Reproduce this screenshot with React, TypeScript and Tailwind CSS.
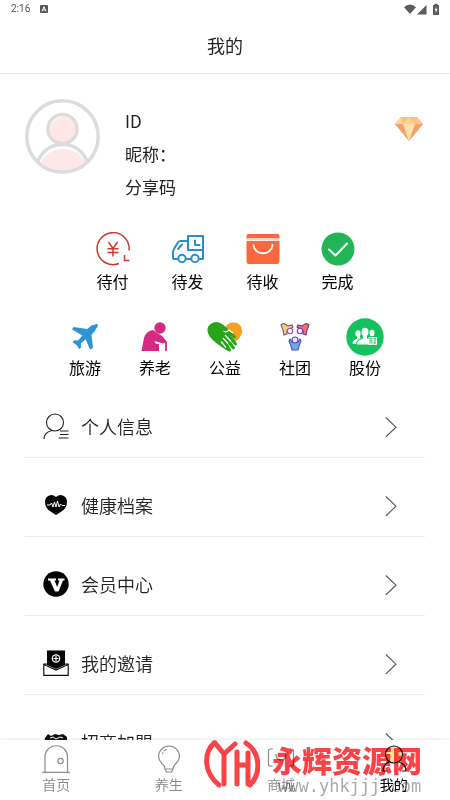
import type { ReactNode } from "react";

function StatusBar() {
  return (
    <div className="flex h-[18px] shrink-0 items-center justify-between pr-[10px] pl-[11px] font-['Roboto',sans-serif] text-[10px] leading-none text-[#555]">
      <div className="flex items-center gap-[10px]">
        <span>2:16</span>
        <svg className="size-2" viewBox="0 0 8 8" aria-hidden="true">
          <rect width="8" height="8" rx="1" fill="#555" />
          <path d="M2 6.4 4 1.7l2 4.7M2.8 4.9h2.4" fill="none" stroke="#fff" strokeWidth="1" />
        </svg>
      </div>
      <svg className="h-3 w-9" viewBox="0 0 36 12" fill="#5c5c5c" aria-hidden="true">
        <path d="M0 4.2Q6-1.4 12 4.2L6 11z" />
        <path d="M22.500 2v9.500H13z" />
        <path d="M29 2h1.500V.8h3V2H35v10h-6z" />
        <path d="M32.500 3.800 30.600 7.300h1.200v2.500l1.800-3.600h-1.200z" fill="#fff" />
      </svg>
    </div>
  );
}

function Avatar() {
  return (
    <svg className="size-[75px] shrink-0" viewBox="0 0 75 75" role="img" aria-label="头像">
      <circle cx="38" cy="31" r="13" fill="#ffe7e8" />
      <path d="M16 63Q23 50 38 50t22 13Q50 72.500 37.500 72.500T16 63z" fill="#ffe7e8" />
      <g fill="none" stroke="#dcdcdc" strokeWidth="3.500">
        <circle cx="37.500" cy="37.500" r="35.700" />
        <circle cx="37.500" cy="30" r="14.500" />
        <path d="M13 62C18 51 27 45.500 37.500 45.500S57 51 62 62" />
      </g>
    </svg>
  );
}

function Gem() {
  return (
    <svg className="h-[26px] w-[30px]" viewBox="0 0 30 26" role="img" aria-label="会员">
      <path d="M7 1h16l6 7-14 17L1 8z" fill="#f9c27c" />
      <path d="M1 8h8l6 17z" fill="#f3a06b" />
      <path d="M29 8h-8l-6 17z" fill="#f3a06b" />
      <path d="M9 8h12l-6 17z" fill="#fde0ab" />
      <path d="M15 1 9 8h12z" fill="#fbd091" />
      <path d="M7 1 1 8h8z" fill="#fbd59c" />
      <path d="m23 1 6 7h-8z" fill="#f9c889" />
    </svg>
  );
}

const unpaid = (
  <svg className="size-[34px]" viewBox="0 0 34 34" fill="none" stroke="#c93a2c" strokeWidth="1.500" aria-hidden="true">
    <path d="M23 31.500A16 16 0 1 1 33 18.500" />
    <path d="m12.500 10 4.500 6.500 4.500-6.500M17 16.500v8M11.500 16.800h11M11.500 20.500h11M28.500 23v5.500h5" />
  </svg>
);
const truck = (
  <svg className="size-[34px]" viewBox="0 0 34 34" fill="none" stroke="#278fce" strokeWidth="2" strokeLinejoin="round" strokeLinecap="round" aria-hidden="true">
    <path d="M15.500 9H9.500Q7.500 9 6.500 11L3 17l-1 2.500V26q0 1 1 1h4M15 27h5M28 27h4V4H17v14h15" />
    <path d="M24 8.500V13h4.500M7 17l4-4.500" />
    <circle cx="11" cy="26.500" r="3.700" />
    <circle cx="24" cy="26.500" r="3.700" />
  </svg>
);
const bag = (
  <svg className="size-[34px]" viewBox="0 0 34 34" aria-hidden="true">
    <path d="M2.500 2h29q2 0 2 2v2.500H.5V4q0-2 2-2zM.5 9h33v20.500q0 2.500-2.500 2.500H3Q.5 32 .5 29.500z" fill="#f9683f" />
    <path d="M.5 6.200h33V8.500H.5z" fill="#ffd1bf" />
    <path d="M7.500 13c1 11 18 11 19 0" fill="none" stroke="#fff3ec" strokeWidth="2" strokeLinecap="round" />
  </svg>
);
const done = (
  <svg className="size-[34px]" viewBox="0 0 34 34" aria-hidden="true">
    <circle cx="17" cy="17" r="16.500" fill="#22b556" />
    <path d="m8 17.500 6.500 6L26 11.500" fill="none" stroke="#fff" strokeWidth="2" strokeLinecap="round" strokeLinejoin="round" />
  </svg>
);
const plane = (
  <svg className="size-[38px]" viewBox="0 0 38 38" fill="#2b96d3" aria-hidden="true">
    <path d="M30 6.200c1.600-.8 2.400.4 1.700 2L28.500 13.500l-3 3.300 1.500 13.200-3 1.500-4.300-10.200-5 4.200.5 4-2 1.600-2.600-4.200-4.100-2.700 1.700-2 3.800.4 4.500-5L6 11.500 7.500 9l13.800 2L25.500 7.500z" />
  </svg>
);
const elder = (
  <svg className="size-[38px]" viewBox="0 0 38 38" fill="#d52a82" aria-hidden="true">
    <circle cx="24" cy="10" r="5.700" />
    <path d="M17 12Q10.500 12.500 8 20L5.500 33H23v-7h-3l-1.500-3 9 2.500 3-1.500Q27 18 24.500 17z" />
    <path d="M25.500 25q0-2.500 2-2.500t2.500 2.500v8" fill="none" stroke="#d52a82" strokeWidth="1.800" />
  </svg>
);
const charity = (
  <svg className="size-[38px]" viewBox="0 0 38 38" aria-hidden="true">
    <path d="M19 10q2.500-5.500 8-5.500 8.500 0 9 8 .3 5-4.500 9.500L28 25 18 14z" fill="#f7a01f" />
    <path d="M4.500 6Q11 1.500 17.500 7L29 17.500q1.500 1.500.5 2.500t-2.500-.5L23 16l7 8q1.500 2 .5 3t-2.500-.5l-5-5.500 5 7q1.500 2 .5 3t-2.500-.5l-5-6 3.500 6q1 1.500 0 2.500t-2.500 0Q10 26 4 19-1.500 11 4.500 6z" fill="#28a31a" />
    <path d="m17 20 5 5.500m-7-2 5 6M19 17l6 6.500M17.500 13q3 2 5.500-1l4 3" fill="none" stroke="#fff" strokeWidth="1.200" />
  </svg>
);
const club = (
  <svg className="size-[38px]" viewBox="0 0 38 38" strokeWidth="1.100" aria-hidden="true">
    <path d="M5 7q2-2 4-1l3 2 4-1 1 2-3 2q-4 1-3 5l-3 1-1-5z" fill="#f6ce72" stroke="#70558b" />
    <path d="M33 7q-2-2-4-1l-3 2-4-1-1 2 3 2q4 1 3 5l3 1 1-5z" fill="#f0706c" stroke="#7d3379" />
    <circle cx="14" cy="13" r="2.700" fill="#fff" stroke="#b148a1" />
    <circle cx="24" cy="13" r="2.700" fill="#fff" stroke="#793bbb" />
    <path d="m14 21 2 3h6l2-3 1 2-2 5-1 4h-6l-1-4-2-5z" fill="#6aa9f4" stroke="#4f53b5" />
    <circle cx="19" cy="22" r="3" fill="#f4dcf4" stroke="#554fa6" />
  </svg>
);
const shares = (
  <svg className="size-[38px]" viewBox="0 0 38 38" aria-hidden="true">
    <circle cx="19" cy="19" r="18.700" fill="#15c15d" />
    <g fill="#fff">
      <ellipse cx="19" cy="14" rx="3.500" ry="4.300" />
      <path d="M11 26.500q0-4 4-5l2-1v-3h4v3l2 1v5z" />
      <ellipse cx="12" cy="15.500" rx="2.600" ry="3.300" />
      <path d="M6.500 26q0-4 3-4.500l1.500-1V18h3l.5 2.500q-4.500 2-4.500 5.500z" />
      <ellipse cx="26" cy="15" rx="2.500" ry="3.300" />
      <path d="M22.500 19h8.500v8h-8.500z" />
    </g>
    <path d="M24 20v6m0-5.500h2V26m-2-3h2m1.500-2.500H30l-.5 2h-1l-.5-2m-.5 3.500H30l-2.500 2.500m0-2.500 2.500 2.500" fill="none" stroke="#15c15d" strokeWidth=".7" />
  </svg>
);

const personIcon = (
  <svg className="size-[26px]" viewBox="0 0 26 26" fill="none" stroke="#222" strokeWidth="1.100" aria-hidden="true">
    <circle cx="12" cy="9.500" r="8.500" />
    <path d="M9 17.500Q1.500 19 1 26M17 18h8.500m-8.500 3.500h8.500M15.500 25h10" />
  </svg>
);
const healthIcon = (
  <svg className="size-[26px]" viewBox="0 0 26 26" aria-hidden="true">
    <path d="M13 5Q10 2.500 7 3.200 2 4.500 2 10q0 5 4 8.500L13 23l7-4.500q4-3.500 4-8.500 0-5.500-5-6.800-3-.7-6 1.800z" fill="#050505" />
    <path d="M4 13h3l1.500-2 1.500 4 1.500-5 1.500 5 1.500-6 1.500 6 1.500-3 1.500 1.500h3" fill="none" stroke="#fff" strokeWidth="1" />
  </svg>
);
const vipIcon = (
  <svg className="size-[26px]" viewBox="0 0 26 26" aria-hidden="true">
    <circle cx="13" cy="13" r="12.700" fill="#050505" />
    <path d="M5 7.500h8v2h-1.500l2.700 6.500L16.500 9.500H15v-2h6.500v2H20L15.500 20.500h-3.500L7 9.500H5z" fill="#fff" />
  </svg>
);
const inviteIcon = (
  <svg className="size-[26px]" viewBox="0 0 26 26" aria-hidden="true">
    <path d="M4 14H.8v11.300h24.400V14H22M1 14.500 13 20l12-5.500" fill="none" stroke="#111" strokeWidth="1.200" />
    <path d="M4 .5h18V15l-9 4-9-4z" fill="#050505" />
    <circle cx="13" cy="8.500" r="3.700" fill="none" stroke="#fff" strokeWidth="1.300" />
    <path d="M13 6v5m-2.500-2.500h5" stroke="#fff" strokeWidth="1.200" />
  </svg>
);
const joinIcon = (
  <svg className="size-[26px]" viewBox="0 0 26 26" fill="#111" aria-hidden="true">
    <path d="m2 9 3-4 3 2 4-2 4 1 4-1 4 3v8l-6 4-6 4-8-7-3-2z" />
    <path d="m7 9 3-1 3 2 4-2 3 1" fill="none" stroke="#fff" strokeWidth="1" />
  </svg>
);

const orders = [
  { label: "待付", icon: unpaid },
  { label: "待发", icon: truck },
  { label: "待收", icon: bag },
  { label: "完成", icon: done },
];
const services = [
  { label: "旅游", icon: plane },
  { label: "养老", icon: elder },
  { label: "公益", icon: charity },
  { label: "社团", icon: club },
  { label: "股份", icon: shares },
];
const menu = [
  { label: "个人信息", icon: personIcon },
  { label: "健康档案", icon: healthIcon },
  { label: "会员中心", icon: vipIcon },
  { label: "我的邀请", icon: inviteIcon },
  { label: "招商加盟", icon: joinIcon },
];

function Shortcut({ label, icon }: { label: string; icon: ReactNode }) {
  return (
    <button type="button" className="flex flex-1 flex-col items-center justify-between text-base leading-[23px] text-black">
      {icon}
      {label}
    </button>
  );
}

function MenuRow({ label, icon }: { label: string; icon: ReactNode }) {
  return (
    <li className="border-b border-[#ececec] pt-[33px] pb-[17px]">
      <a href="#" className="flex h-7 items-center gap-3 pr-7 pl-[18px] text-lg leading-7 font-[350] text-[#222]">
        {icon}
        <span className="flex-1">{label}</span>
        <svg className="h-[22px] w-3" viewBox="0 0 12 22" fill="none" stroke="#555" strokeWidth="1.100" aria-hidden="true">
          <path d="m.8 2.500 10.200 9.700L.8 22" />
        </svg>
      </a>
    </li>
  );
}

const homeTab = (
  <svg className="size-7" viewBox="0 0 28 28" fill="none" stroke="#8c8c8c" strokeWidth="1.200" aria-hidden="true">
    <path d="M0 27.300h28M3 27V12a11 11 0 0 1 22.500 0v15" />
    <circle cx="18.500" cy="16" r="2.700" />
  </svg>
);
const bulbTab = (
  <svg className="size-7" viewBox="0 0 28 28" fill="none" stroke="#8c8c8c" strokeWidth="1.200" aria-hidden="true">
    <path d="M10 24Q10 21 7 18.500 3.500 15 3.500 11.500A10.500 10.500 0 0 1 24.500 11.500q0 3.500-3.500 7-3 2.500-3 5.500zM10 24l1.500 3h5l1.500-3M7.500 9l.5-1.500M9 6l2.500-1.700" />
  </svg>
);
const shopTab = (
  <svg className="size-7" viewBox="0 0 28 28" fill="none" stroke="#8c8c8c" strokeWidth="1.200" aria-hidden="true">
    <path d="M6 4H3.500Q1.500 4 1.500 6v13q0 2 2 2H6M22 4h2.500q2 0 2 2v13q0 2-2 2H22M9 9q0 6 5 6t5-6" />
  </svg>
);
const mineTab = (
  <svg className="size-7" viewBox="0 0 28 28" aria-hidden="true">
    <circle cx="14" cy="9.500" r="8.500" fill="#ffdf9e" stroke="#151515" strokeWidth="1.200" />
    <path d="M9 17q-6 2.500-6 9h4M19 17q7 2.500 7 9h-4" fill="none" stroke="#151515" strokeWidth="1.200" />
  </svg>
);

const tabs = [
  { label: "首页", icon: homeTab, active: false },
  { label: "养生", icon: bulbTab, active: false },
  { label: "商城", icon: shopTab, active: false },
  { label: "我的", icon: mineTab, active: true },
];

function Watermark() {
  return (
    <div className="pointer-events-none absolute right-7 bottom-1 flex items-start gap-3 mix-blend-multiply">
      <svg className="h-[50px] w-14" viewBox="0 0 56 50" fill="none" stroke="#fb4347" strokeWidth="5" strokeLinecap="round" strokeLinejoin="round" aria-hidden="true">
        <path d="M10 4C-1 15 0 34 15 46" />
        <path d="m11 4 9 11v30M31 5 20 15" />
        <path d="M33 13v32M33 26h11M44 14v31" />
        <path d="M42 4C57 14 57 35 46 46" />
      </svg>
      <div className="pt-[3px] whitespace-nowrap">
        <p className="text-[30px] leading-[34px] font-black text-[#fb4347]">永辉资源网</p>
        <p className="pl-[6px] font-['DejaVu_Sans_Mono',monospace] text-[17px] leading-5 text-[#aaa]">www.yhkjjj.com</p>
      </div>
    </div>
  );
}

export default function App() {
  return (
    <div className="flex h-screen flex-col overflow-hidden bg-white font-['Noto_Sans_CJK_SC',sans-serif] text-[#222]">
      <StatusBar />
      <header className="flex h-14 shrink-0 items-center justify-center border-b border-[#e8e8e8] pb-0.5">
        <h1 className="text-lg leading-7">我的</h1>
      </header>

      <main className="min-h-0 flex-1 overflow-hidden px-[25px]">
        <section className="flex h-[133px] items-start pt-[25px]">
          <Avatar />
          <div className="mt-[5px] ml-[25px] flex-1 text-[17px] leading-[33px]">
            <p>ID</p>
            <p>昵称：</p>
            <p>分享码</p>
          </div>
          <div className="mt-[17px] mr-px">
            <Gem />
          </div>
        </section>

        <section className="mt-[25px] flex h-[61px] px-[50px]">
          {orders.map((o) => (
            <Shortcut key={o.label} {...o} />
          ))}
        </section>
        <section className="mt-[25px] flex h-[61px] px-[25px]">
          {services.map((s) => (
            <Shortcut key={s.label} {...s} />
          ))}
        </section>

        <ul>
          {menu.map((m) => (
            <MenuRow key={m.label} {...m} />
          ))}
        </ul>
      </main>

      <nav className="relative flex h-[60px] shrink-0 bg-white pt-[5px] shadow-[0_-1px_3px_rgba(0,0,0,0.08)]">
        {tabs.map((t) => (
          <a
            key={t.label}
            href="#"
            className={
              t.active
                ? "flex flex-1 flex-col items-center gap-px text-sm leading-5 text-black"
                : "flex flex-1 flex-col items-center gap-px text-sm leading-5 font-[350] text-[#888]"
            }
          >
            {t.icon}
            {t.label}
          </a>
        ))}
        <Watermark />
      </nav>
    </div>
  );
}
